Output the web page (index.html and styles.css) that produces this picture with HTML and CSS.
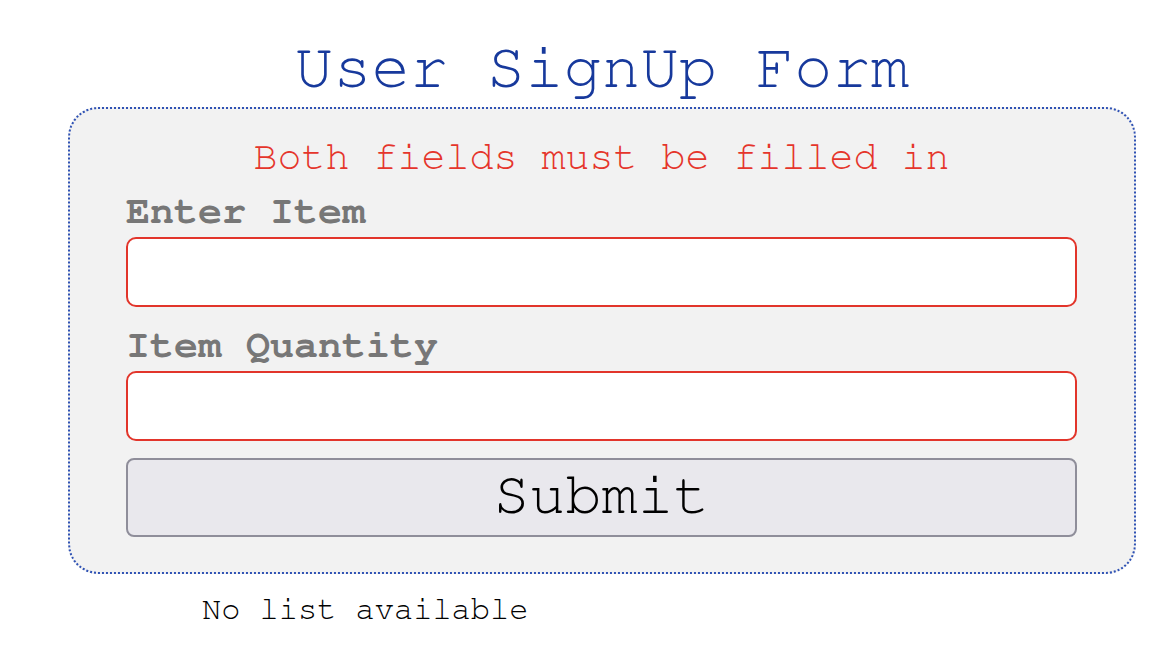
FILE: index.html
```html
<!DOCTYPE html>
<html lang="en">
<head>
<meta charset="utf-8">
<title>User SignUp Form</title>
<link rel="stylesheet" href="styles.css">
</head>
<body>
<div class="page">
  <h1 class="title">User SignUp Form</h1>
  <form class="card">
    <p class="error">Both fields must be filled in</p>
    <label class="label" for="item">Enter Item</label>
    <input class="field" id="item" type="text">
    <label class="label label-second" for="qty">Item Quantity</label>
    <input class="field" id="qty" type="text">
    <button class="submit" type="button">Submit</button>
  </form>
  <p class="empty">No list available</p>
</div>
</body>
</html>
```

FILE: styles.css
```css
html, body {
  margin: 0;
  padding: 0;
  background: #ffffff;
}

body {
  font-family: "Nimbus Mono PS", "Nimbus Mono L", FreeMono, "Courier New", "Liberation Mono", monospace;
}

.page {
  width: 1068px;
  margin-left: 68px;
  padding-top: 32px;
}

.title {
  margin: 0 0 3px 0;
  font-size: 64px;
  line-height: 72px;
  font-weight: normal;
  color: #17399c;
  text-align: center;
}

.card {
  box-sizing: border-box;
  width: 1068px;
  height: 467px;
  border: 2px dotted #2f52b4;
  border-radius: 30px;
  background: #f2f2f2;
  padding: 24px 57px 0 56px;
  display: flex;
  flex-direction: column;
}

.error {
  margin: 0 0 8px 0;
  font-size: 40px;
  line-height: 48px;
  color: #e5352b;
  text-align: center;
}

.label {
  display: block;
  font-size: 40px;
  line-height: 44px;
  padding-bottom: 4px;
  font-weight: bold;
  color: #777777;
}

.label-second {
  margin-top: 16px;
}

.field {
  box-sizing: border-box;
  width: 100%;
  height: 70px;
  margin: 0;
  border: 2px solid #e2352b;
  border-radius: 10px;
  background: #ffffff;
  outline: none;
}

.submit {
  box-sizing: border-box;
  width: 100%;
  height: 79px;
  margin-top: 17px;
  padding: 0 0 6px 0;
  border: 2px solid #8f8e9a;
  border-radius: 8px;
  background: #e9e8ed;
  font-family: "Nimbus Mono PS", "Nimbus Mono L", FreeMono, "Courier New", "Liberation Mono", monospace;
  font-size: 60px;
  color: #000000;
  display: flex;
  align-items: center;
  justify-content: center;
}

.empty {
  margin: 17px 0 0 134px;
  font-size: 32px;
  line-height: 36px;
  color: #000000;
}
```
